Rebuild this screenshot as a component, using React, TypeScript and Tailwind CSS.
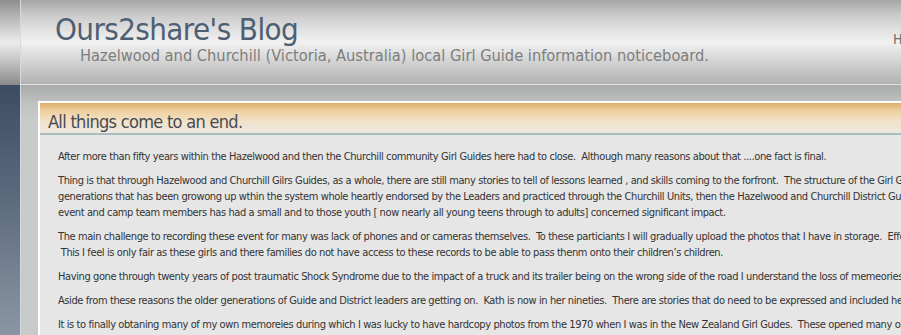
import React from "react";

const lines: string[][] = [
  [
    "After more than fifty years within the Hazelwood and then the Churchill community Girl Guides here had to close.\u00a0 Although many reasons about that ....one fact is final.",
  ],
  [
    "Thing is that through Hazelwood and Churchill Gilrs Guides, as a whole, there are still many stories to tell of lessons learned , and skills coming to the forfront.\u00a0 The structure of the Girl Guides movement over the",
    "generations that has been growong up wthin the system whole heartly endorsed by the Leaders and practiced through the Churchill Units, then the Hazelwood and Churchill District Guides and all the",
    "event and camp team members has had a small and to those youth [ now nearly all young teens through to adults] concerned significant impact.",
  ],
  [
    "The main challenge to recording these event for many was lack of phones and or cameras themselves.\u00a0 To these particiants I will gradually upload the photos that I have in storage.\u00a0 Effort will be made",
    "\u00a0This I feel is only fair as these girls and there families do not have access to these records to be able to pass thenm onto their children\u2019s children.",
  ],
  [
    "Having gone through twenty years of post traumatic Shock Syndrome due to the impact of a truck and its trailer being on the wrong side of the road I understand the loss of memeories",
  ],
  [
    "Aside from these reasons the older generations of Guide and District leaders are getting on.\u00a0 Kath is now in her nineties.\u00a0 There are stories that do need to be expressed and included here",
  ],
  [
    "It is to finally obtaning many of my own memoreies during which I was lucky to have hardcopy photos from the 1970 when I was in the New Zealand Girl Gudes.\u00a0 These opened many old memories",
    "sadness when\u00a0 Lady Baden-Powell passed over.",
  ],
];

export default function App() {
  return (
    <div
      className="w-[901px] h-[335px] overflow-hidden flex bg-[#c6cac9]"
      style={{ fontFamily: "'DejaVu Sans Condensed', 'Liberation Sans', sans-serif" }}
    >
      {/* left strip */}
      <div className="w-[20px] flex flex-col shrink-0">
        <div className="h-[85px] bg-[linear-gradient(to_bottom,#8e8e8e_0%,#c8c8c8_30%,#ececec_50%,#bdbdbd_75%,#8a8a8a_100%)]" />
        <div className="flex-1 bg-[linear-gradient(to_bottom,#3c4c63_0%,#5c6a7e_45%,#8a96a3_100%)]" />
      </div>
      <div className="w-px shrink-0 bg-[#d7d8e3]" />
      {/* main */}
      <div className="flex-1 flex flex-col min-w-0">
        <div className="h-[84px] shrink-0 relative bg-[linear-gradient(to_bottom,#a6a6a6_0%,#cbcbcb_18%,#e6e6e6_40%,#f1f1f1_50%,#dedede_65%,#c4c4c4_85%,#b2b2b2_100%)] pl-[34px] pt-[11px]">
          <div className="text-[31px] leading-[36px] text-[#4f5f73] tracking-[-0.6px]">
            Ours2share's Blog
          </div>
          <div className="pl-[25px] -mt-[1px] text-[16.3px] leading-[20px] text-[#7d7d7d]">
            Hazelwood and Churchill (Victoria, Australia) local Girl Guide information noticeboard.
          </div>
          <div className="absolute left-[872px] top-[31px] text-[14px] leading-[16px] text-[#6e6e6e]">
            H
          </div>
        </div>
        <div className="h-px shrink-0 bg-[#e4e4e4]" />
        <div className="flex-1 bg-[linear-gradient(to_bottom,#a9aba9_0%,#c2c4c3_8%,#c6cac9_14%,#c6cac9_100%)] pl-[17px] pt-[16px] overflow-hidden">
          <div className="w-[1200px] border-t-2 border-l-2 border-white bg-[#e6e6e6]">
            <div className="h-[32px] bg-[linear-gradient(to_bottom,#dcad6c_0%,#eecf9c_25%,#f2e2c8_60%,#ede8e1_100%)] pl-[8px] pt-[8px] border-b-2 border-[#a9bcbf]">
              <div className="text-[18px] leading-[22px] text-[#474b52] tracking-[-0.7px]">
                All things come to an end.
              </div>
            </div>
            <div className="pl-[18px] pt-[14px] text-[11px] leading-[16px] text-[#333333] tracking-[-0.4px]">
              {lines.map((p, i) => (
                <div key={i} className="mb-[8px]">
                  {p.map((l, j) => (
                    <div key={j} className="whitespace-pre">
                      {l}
                    </div>
                  ))}
                </div>
              ))}
            </div>
          </div>
        </div>
      </div>
    </div>
  );
}
